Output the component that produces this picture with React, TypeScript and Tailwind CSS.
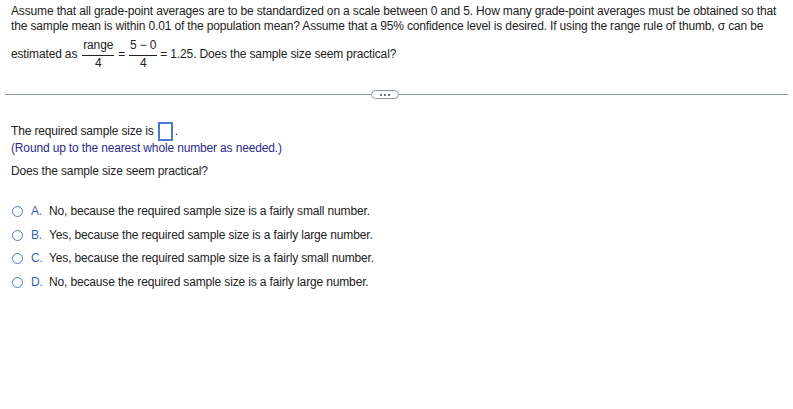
const font = { fontFamily: '"Liberation Sans", Arial, sans-serif' };

function Fraction({ top, bottom }: { top: string; bottom: string }) {
  return (
    <span className="inline-flex flex-col items-center text-[12px] leading-[13px]">
      <span className="px-[1px] pb-[3px] border-b border-[#222]">{top}</span>
      <span className="pt-[1px]">{bottom}</span>
    </span>
  );
}

const options = [
  { key: "A.", text: "No, because the required sample size is a fairly small number." },
  { key: "B.", text: "Yes, because the required sample size is a fairly large number." },
  { key: "C.", text: "Yes, because the required sample size is a fairly small number." },
  { key: "D.", text: "No, because the required sample size is a fairly large number." },
];

export default function App() {
  return (
    <div
      className="w-[793px] h-[409px] overflow-hidden bg-white text-[#222] text-[12px] leading-[15px] tracking-[-0.15px]"
      style={font}
    >
      <div className="px-[11px] pt-[4px]">
        <p className="whitespace-nowrap">
          Assume that all grade-point averages are to be standardized on a scale between 0 and 5. How many
          grade-point averages must be obtained so that
          <br />
          the sample mean is within 0.01 of the population mean? Assume that a 95% confidence level is desired. If
          using the range rule of thumb, σ can be
        </p>
        <div className="mt-[4px] flex items-center whitespace-nowrap">
          <span>estimated as</span>
          <span className="ml-[5px]">
            <Fraction top="range" bottom="4" />
          </span>
          <span className="mx-[4px]">=</span>
          <Fraction top="5 − 0" bottom="4" />
          <span className="ml-[3px]">= 1.25. Does the sample size seem practical?</span>
        </div>
      </div>

      <div className="relative mx-[5px] mt-[24px] h-px bg-[#8a96a3]">
        <div className="absolute left-[366px] top-[-4px] w-[28px] h-[9px] rounded-full border border-[#8a96a3] bg-white flex items-center justify-center gap-[2px]">
          <span className="w-[2px] h-[2px] bg-[#6b7785]" />
          <span className="w-[2px] h-[2px] bg-[#6b7785]" />
          <span className="w-[2px] h-[2px] bg-[#6b7785]" />
        </div>
      </div>

      <div className="px-[11px] mt-[27px]">
        <div className="flex items-center h-[19px]">
          <span>The required sample size is</span>
          <span className="ml-[4px] w-[15px] h-[19px] border-2 border-[#4a7bd4]" />
          <span className="ml-[2px]">.</span>
        </div>
        <p className="text-[#2b2b8c]">(Round up to the nearest whole number as needed.)</p>
        <p className="mt-[8px]">Does the sample size seem practical?</p>

        <div className="mt-[21px] flex flex-col">
          {options.map((o) => (
            <div key={o.key} className="flex items-center h-[23.5px]">
              <span className="ml-[1px] w-[11px] h-[11px] rounded-full border-[1.5px] border-[#4f78c4]" />
              <span className="ml-[8px] w-[18px] text-[#3a5fa8]">{o.key}</span>
              <span>{o.text}</span>
            </div>
          ))}
        </div>
      </div>
    </div>
  );
}
